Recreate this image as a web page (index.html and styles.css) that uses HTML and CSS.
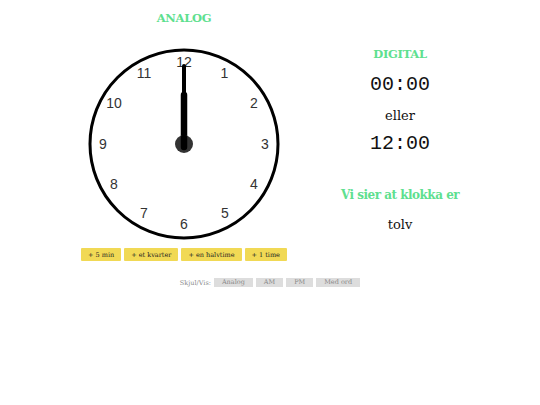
FILE: index.html
```html
<!DOCTYPE html>
<html>
<head>
<meta charset="utf-8">
<link rel="stylesheet" href="styles.css">
</head>
<body>
<div class="page">
  <div class="columns">
    <section class="analog">
      <h2 class="title">ANALOG</h2>
      <svg class="clock" width="196" height="196" viewBox="0 0 196 196">
        <circle cx="98" cy="98" r="94" fill="#fff" stroke="#000" stroke-width="3"/>
        <g class="nums" font-family="Liberation Sans, Arial, sans-serif" font-size="14" fill="#333" text-anchor="middle" dominant-baseline="central">
          <text x="98" y="16">12</text>
          <text x="138.5" y="27">1</text>
          <text x="168" y="57">2</text>
          <text x="179" y="98">3</text>
          <text x="168" y="138">4</text>
          <text x="139" y="167">5</text>
          <text x="98" y="178">6</text>
          <text x="58" y="167">7</text>
          <text x="28" y="138">8</text>
          <text x="17" y="98">9</text>
          <text x="28" y="57">10</text>
          <text x="58" y="27">11</text>
        </g>
        <line x1="98" y1="100" x2="98" y2="20" stroke="#000" stroke-width="4" stroke-linecap="round"/>
        <line x1="98" y1="100" x2="98" y2="49" stroke="#000" stroke-width="6.5" stroke-linecap="round"/>
        <circle cx="98" cy="98" r="9" fill="#333"/>
        <line x1="98" y1="101" x2="98" y2="92" stroke="#000" stroke-width="6.5" stroke-linecap="round"/>
      </svg>
      <div class="adds">
        <button class="add">+ 5 min</button>
        <button class="add">+ et kvarter</button>
        <button class="add">+ en halvtime</button>
        <button class="add">+ 1 time</button>
      </div>
    </section>
    <section class="digital">
      <h2 class="title">DIGITAL</h2>
      <div class="time">00:00</div>
      <div class="word">eller</div>
      <div class="time second">12:00</div>
      <h2 class="title say">Vi sier at klokka er</h2>
      <div class="word spoken">tolv</div>
    </section>
  </div>
  <div class="toggles">
    <span class="label">Skjul/Vis:</span>
    <button class="tog">Analog</button>
    <button class="tog">AM</button>
    <button class="tog">PM</button>
    <button class="tog">Med ord</button>
  </div>
</div>
</body>
</html>
```
FILE: styles.css
```css
* { box-sizing: border-box; }
body {
  margin: 0;
  background: #fff;
  font-family: "DejaVu Serif", "Liberation Serif", serif;
  color: #111;
}
.page { width: 540px; }
.columns {
  display: flex;
  padding-left: 83px;
}
.analog {
  width: 202px;
  display: flex;
  flex-direction: column;
  align-items: center;
}
.title {
  margin: 0;
  color: #5ee08f;
  font-weight: bold;
  font-size: 11.5px;
  letter-spacing: -0.3px;
  line-height: 16px;
}
.analog .title { margin-top: 10px; }
.clock { display: block; margin-top: 20px; }
.adds {
  display: flex;
  gap: 3px;
  margin-top: 6px;
}
.add {
  border: 0;
  margin: 0;
  background: #f1d955;
  font-family: "DejaVu Serif", serif;
  font-size: 6.5px;
  color: #222;
  height: 13px;
  padding: 0 7px;
  border-radius: 1px;
  white-space: nowrap;
}
.digital {
  width: 230px;
  display: flex;
  flex-direction: column;
  align-items: center;
}
.digital .title:first-child { margin-top: 46px; }
.time {
  font-family: "Liberation Mono", "Courier New", monospace;
  font-size: 20px;
  line-height: 24px;
  margin-top: 11px;
  color: #111;
}
.time.second { margin-top: 8px; }
.word {
  font-size: 13px;
  line-height: 16px;
  margin-top: 11px;
}
.say {
  font-size: 12px;
  letter-spacing: -0.5px;
  margin-top: 31px;
}
.spoken { margin-top: 14px; }
.toggles {
  display: flex;
  justify-content: center;
  align-items: center;
  gap: 3px;
  margin-top: 17px;
}
.label {
  font-size: 6.5px;
  color: #888;
}
.tog {
  border: 0;
  margin: 0;
  background: #ddd;
  color: #888;
  font-family: "DejaVu Serif", serif;
  font-size: 6.5px;
  height: 9px;
  padding: 0 8px;
  line-height: 9px;
  white-space: nowrap;
}
```
